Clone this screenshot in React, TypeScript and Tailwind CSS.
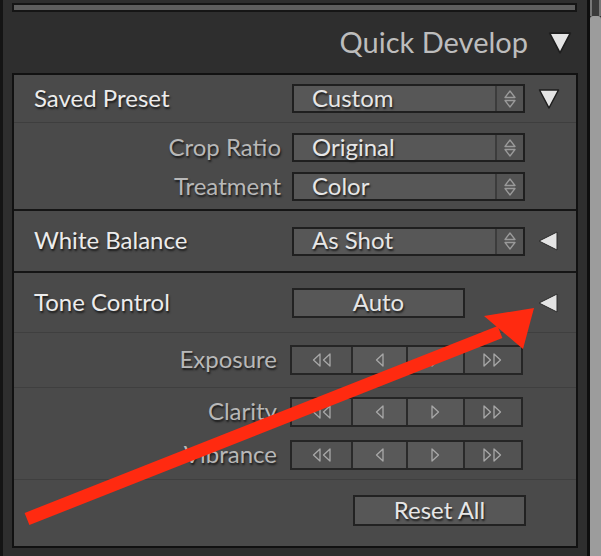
import React from "react";

const shadow = "[text-shadow:1px_2px_2px_#1a1a1a]";
const ff = "font-['Lato',sans-serif]";

function UpDown() {
  return (
    <svg width="14" height="22" viewBox="0 0 14 22">
      <path d="M2 9.5 L7 3 L12 9.5 Z" fill="none" stroke="#9a9a9a" strokeWidth="1.3" strokeLinejoin="round" />
      <path d="M2 12.5 L7 19 L12 12.5 Z" fill="none" stroke="#9a9a9a" strokeWidth="1.3" strokeLinejoin="round" />
    </svg>
  );
}

function Select({ value }: { value: string }) {
  return (
    <div className="flex h-[29px] w-[233px] border-2 border-[#1f1f1f] bg-[#575757]">
      <div className={`flex flex-1 items-center pb-[2px] pl-[18px] text-[24px] leading-none text-[#e6e6e6] ${shadow}`}>{value}</div>
      <div className="flex w-[28px] items-center justify-center border-l-2 border-[#3c3c3c] bg-[#535353]">
        <UpDown />
      </div>
    </div>
  );
}

function TriDown({ size = 22 }: { size?: number }) {
  return (
    <svg width={size} height={size} viewBox="0 0 22 22">
      <path d="M1.5 2 L20.5 2 L11 20 Z" fill="#e4e4e4" stroke="#1e1e1e" strokeWidth="1.5" strokeLinejoin="round" />
    </svg>
  );
}

function TriLeft() {
  return (
    <svg width="22" height="24" viewBox="0 0 22 24">
      <path d="M20 3 L20 21 L2 12 Z" fill="#e4e4e4" stroke="#2a2a2a" strokeWidth="1" strokeLinejoin="round" />
    </svg>
  );
}

function Tri({ dir }: { dir: "l" | "r" }) {
  return dir === "l" ? (
    <path d="M8 1 L8 13 L1.5 7 Z" fill="none" stroke="#a8a8a8" strokeWidth="1.3" strokeLinejoin="round" />
  ) : (
    <path d="M1 1 L1 13 L7.5 7 Z" fill="none" stroke="#a8a8a8" strokeWidth="1.3" strokeLinejoin="round" />
  );
}

function Seg({ w, light, kind }: { w: string; light?: boolean; kind: "ll" | "l" | "r" | "rr" }) {
  return (
    <div className={`flex items-center justify-center ${w} ${light ? "bg-[#595959]" : "bg-[#525252]"} border-r-2 border-[#2a2a2a] last:border-r-0`}>
      {kind === "ll" && (
        <svg width="20" height="14" viewBox="0 0 20 14">
          <Tri dir="l" />
          <g transform="translate(10 0)"><Tri dir="l" /></g>
        </svg>
      )}
      {kind === "l" && (
        <svg width="9" height="14" viewBox="0 0 9 14"><Tri dir="l" /></svg>
      )}
      {kind === "r" && (
        <svg width="9" height="14" viewBox="0 0 9 14"><Tri dir="r" /></svg>
      )}
      {kind === "rr" && (
        <svg width="20" height="14" viewBox="0 0 20 14">
          <Tri dir="r" />
          <g transform="translate(10 0)"><Tri dir="r" /></g>
        </svg>
      )}
    </div>
  );
}

function Stepper() {
  return (
    <div className="flex h-[30px] w-[233px] border-2 border-[#252525]">
      <Seg w="w-[61px]" kind="ll" />
      <Seg w="w-[55px]" light kind="l" />
      <Seg w="w-[57px]" light kind="r" />
      <Seg w="flex-1" kind="rr" />
    </div>
  );
}

function SubLabel({ children, w }: { children: React.ReactNode; w: string }) {
  return (
    <div className={`${w} pb-[2px] text-right text-[24px] leading-none text-[#b8b8b8] ${shadow}`}>{children}</div>
  );
}

export default function App() {
  return (
    <div className={`relative flex h-[556px] w-[601px] overflow-hidden bg-[#2e2e2e] ${ff}`}>
      <div className="w-[3px] bg-[#141414]" />
      <div className="flex w-[584px] flex-col pl-[9px] pr-[9px]">
        <div className="mt-[3px] h-[9px] w-[565px] border-2 border-[#151515] bg-[#5e5e5e]" />
        <div className="flex h-[61px] items-center justify-end pr-[6px]">
          <span className="mr-[20px] pb-[3px] text-[29px] leading-none text-[#bdbdbd]">Quick Develop</span>
          <TriDown size={24} />
        </div>
        {/* panel */}
        <div className="flex h-[475px] w-[566px] flex-col border-2 border-[#111] bg-[#4a4a4a]">
          {/* Saved preset */}
          <div className="flex h-[47px] items-center pl-[20px]">
            <div className={`w-[258px] pb-[2px] text-[24px] leading-none text-[#ececec] ${shadow}`}>Saved Preset</div>
            <Select value="Custom" />
            <div className="ml-[13px] flex"><TriDown /></div>
          </div>
          <div className="h-[1px] bg-[#3e3e3e]" />
          <div className="flex flex-col gap-[10px] pt-[10px] pb-[8px]">
            <div className="flex items-center">
              <SubLabel w="w-[267px]">Crop Ratio</SubLabel>
              <div className="ml-[11px]"><Select value="Original" /></div>
            </div>
            <div className="flex items-center">
              <SubLabel w="w-[267px]">Treatment</SubLabel>
              <div className="ml-[11px]"><Select value="Color" /></div>
            </div>
          </div>
          <div className="h-[2px] bg-[#151515]" />
          {/* White balance */}
          <div className="flex h-[60px] items-center pl-[20px]">
            <div className={`w-[258px] pb-[2px] text-[24px] leading-none text-[#ececec] ${shadow}`}>White Balance</div>
            <Select value="As Shot" />
            <div className="ml-[12px] flex"><TriLeft /></div>
          </div>
          <div className="h-[2px] bg-[#151515]" />
          {/* Tone control */}
          <div className="flex h-[59px] items-center pl-[20px]">
            <div className={`w-[258px] pb-[2px] text-[24px] leading-none text-[#ececec] ${shadow}`}>Tone Control</div>
            <div className={`flex h-[30px] w-[173px] items-center justify-center border-2 border-[#222] bg-[#575757] pb-[2px] text-[24px] leading-none text-[#e6e6e6] ${shadow}`}>Auto</div>
            <div className="ml-[72px] flex"><TriLeft /></div>
          </div>
          <div className="h-[1px] bg-[#3f3f3f]" />
          <div className="flex h-[54px] items-center">
            <SubLabel w="w-[263px]">Exposure</SubLabel>
            <div className="ml-[13px]"><Stepper /></div>
          </div>
          <div className="h-[1px] bg-[#3f3f3f]" />
          <div className="flex flex-col gap-[13px] pt-[9px]">
            <div className="flex items-center">
              <SubLabel w="w-[263px]">Clarity</SubLabel>
              <div className="ml-[13px]"><Stepper /></div>
            </div>
            <div className="flex items-center">
              <SubLabel w="w-[263px]">Vibrance</SubLabel>
              <div className="ml-[13px]"><Stepper /></div>
            </div>
          </div>
          <div className="mt-[9px] h-[1px] bg-[#3f3f3f]" />
          <div className="flex justify-end pr-[50px] pt-[15px]">
            <div className={`flex h-[31px] w-[173px] items-center justify-center border-2 border-[#222] bg-[#575757] pb-[2px] text-[24px] leading-none text-[#e6e6e6] ${shadow}`}>Reset All</div>
          </div>
        </div>
      </div>
      <div className="w-[3px] bg-[#0e0e0e]" />
      <div className="flex w-[11px] flex-col bg-[#2a2a2a]">
        <div className="h-[16px] border-x-2 border-[#777] bg-[#3a3a3a]" />
        <div className="flex-1 rounded-t-[3px] bg-[#9c9c9c]" />
      </div>
      {/* annotation arrow */}
      <svg className="pointer-events-none absolute left-0 top-0" width="601" height="556" viewBox="0 0 601 556">
        <line x1="27" y1="519" x2="500" y2="332" stroke="#ff2a10" strokeWidth="13" />
        <polygon points="534,308 484,316 523,349" fill="#ff2a10" />
      </svg>
    </div>
  );
}
